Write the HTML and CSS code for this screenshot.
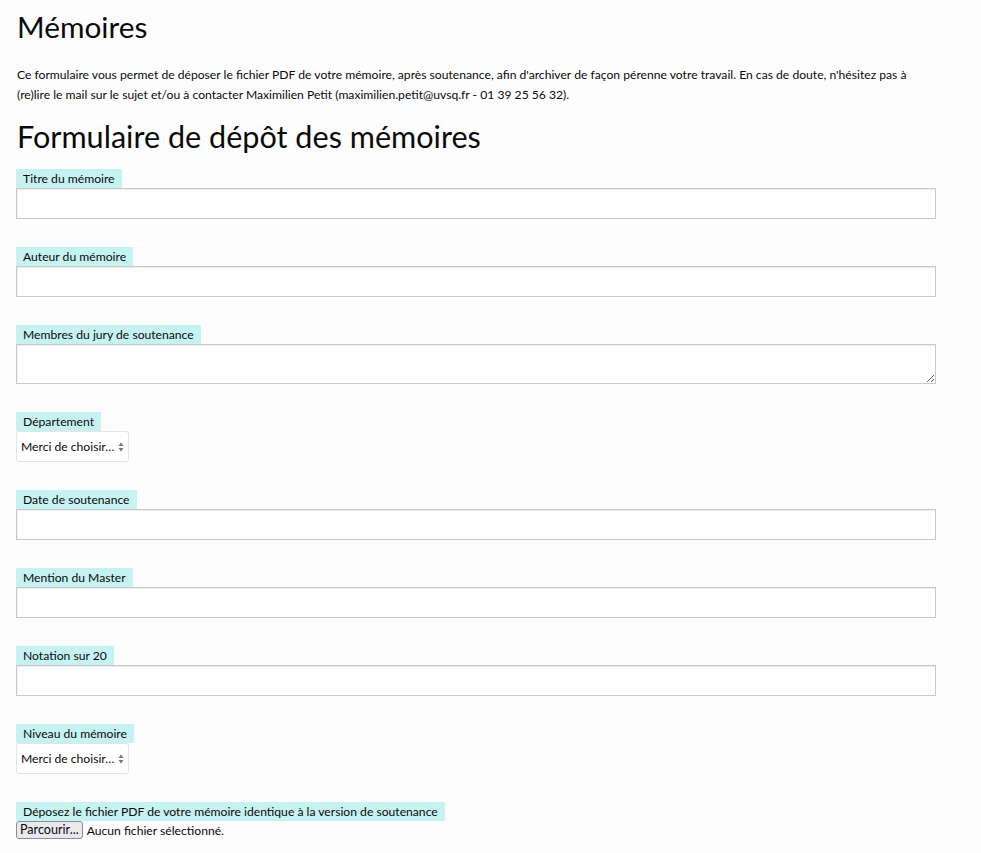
FILE: index.html
```html
<!DOCTYPE html>
<html lang="fr">
<head>
<meta charset="utf-8">
<title>Mémoires</title>
<link rel="stylesheet" href="styles.css">
</head>
<body>
<h1 class="title">Mémoires</h1>
<p class="intro">Ce formulaire vous permet de déposer le fichier PDF de votre mémoire, après soutenance, afin d'archiver de façon pérenne votre travail. En cas de doute, n'hésitez pas à (re)lire le mail sur le sujet et/ou à contacter Maximilien Petit (maximilien.petit@uvsq.fr - 01 39 25 56 32).</p>
<h2 class="title form-title">Formulaire de dépôt des mémoires</h2>
<form class="form">
  <div class="field">
    <label class="lbl" for="titre">Titre du mémoire</label>
    <input class="txt" id="titre" type="text">
  </div>
  <div class="field">
    <label class="lbl" for="auteur">Auteur du mémoire</label>
    <input class="txt" id="auteur" type="text">
  </div>
  <div class="field">
    <label class="lbl" for="jury">Membres du jury de soutenance</label>
    <textarea class="txt area" id="jury"></textarea>
  </div>
  <div class="field">
    <label class="lbl" for="dep">Département</label>
    <span class="sel">
      <select id="dep"><option>Merci de choisir…</option></select>
      <svg class="arrows" width="6" height="10" viewBox="0 0 6 10"><path d="M3 0.5 L5.5 4 H0.5 Z M3 9.5 L5.5 6 H0.5 Z" fill="#777"/></svg>
    </span>
  </div>
  <div class="field">
    <label class="lbl" for="date">Date de soutenance</label>
    <input class="txt" id="date" type="text">
  </div>
  <div class="field">
    <label class="lbl" for="mention">Mention du Master</label>
    <input class="txt" id="mention" type="text">
  </div>
  <div class="field">
    <label class="lbl" for="note">Notation sur 20</label>
    <input class="txt" id="note" type="text">
  </div>
  <div class="field">
    <label class="lbl" for="niveau">Niveau du mémoire</label>
    <span class="sel">
      <select id="niveau"><option>Merci de choisir…</option></select>
      <svg class="arrows" width="6" height="10" viewBox="0 0 6 10"><path d="M3 0.5 L5.5 4 H0.5 Z M3 9.5 L5.5 6 H0.5 Z" fill="#777"/></svg>
    </span>
  </div>
  <div class="field">
    <label class="lbl" for="fichier">Déposez le fichier PDF de votre mémoire identique à la version de soutenance</label>
    <div class="file">
      <label class="btn" for="fichier">Parcourir...</label>
      <span class="none">Aucun fichier sélectionné.</span>
      <input class="hidden" id="fichier" type="file">
    </div>
  </div>
</form>
</body>
</html>
```
FILE: styles.css
```css
html { background: #fdfdfd; }
body {
  margin: 0;
  padding: 0 45px 0 16px;
  font-family: Lato, "Open Sans", sans-serif;
  color: #0a0a0a;
  background: #fdfdfd;
}
.title {
  font-weight: 400;
  font-size: 29.8px;
  line-height: 38px;
  margin: 8px 0 0 1px;
}
.intro {
  font-size: 12.15px;
  line-height: 20px;
  margin: 19px 0 0 1px;
}
.form-title {
  font-size: 30.6px;
  margin-top: 13px;
}
.form {
  display: flex;
  flex-direction: column;
  gap: 28px;
  margin-top: 13px;
}
.field {
  display: flex;
  flex-direction: column;
  align-items: flex-start;
}
.lbl {
  background: #c6f2f1;
  font-size: 12.15px;
  line-height: 19px;
  padding: 0 7px;
}
.txt {
  box-sizing: border-box;
  width: 100%;
  height: 31px;
  margin: 0;
  border: 1px solid #c9c9c9;
  box-shadow: inset 0 1px 0 #ececec, inset 1px 0 0 #f2f2f2;
  background: #fff;
  font: inherit;
}
.area {
  height: 40px;
  resize: vertical;
}
.sel {
  position: relative;
  display: inline-block;
}
.sel select {
  appearance: none;
  -webkit-appearance: none;
  box-sizing: border-box;
  width: 113px;
  height: 31px;
  border: 1px solid #e4e4e4;
  border-radius: 3px;
  background: #fff;
  font-family: Lato, "Open Sans", sans-serif;
  font-size: 12.15px;
  color: #0a0a0a;
  padding: 0 12px 0 4px;
  margin: 0;
}
.arrows {
  position: absolute;
  right: 5px;
  top: 11px;
  pointer-events: none;
}
.file {
  display: flex;
  align-items: center;
  gap: 4px;
}
.btn {
  font-size: 12.6px;
  line-height: 16px;
  padding: 0 3px;
  border: 1px solid #8f8f8f;
  border-radius: 3px;
  background: #e9e9ed;
  color: #0a0a0a;
}
.none { font-size: 12.15px; }
.hidden { display: none; }
```
